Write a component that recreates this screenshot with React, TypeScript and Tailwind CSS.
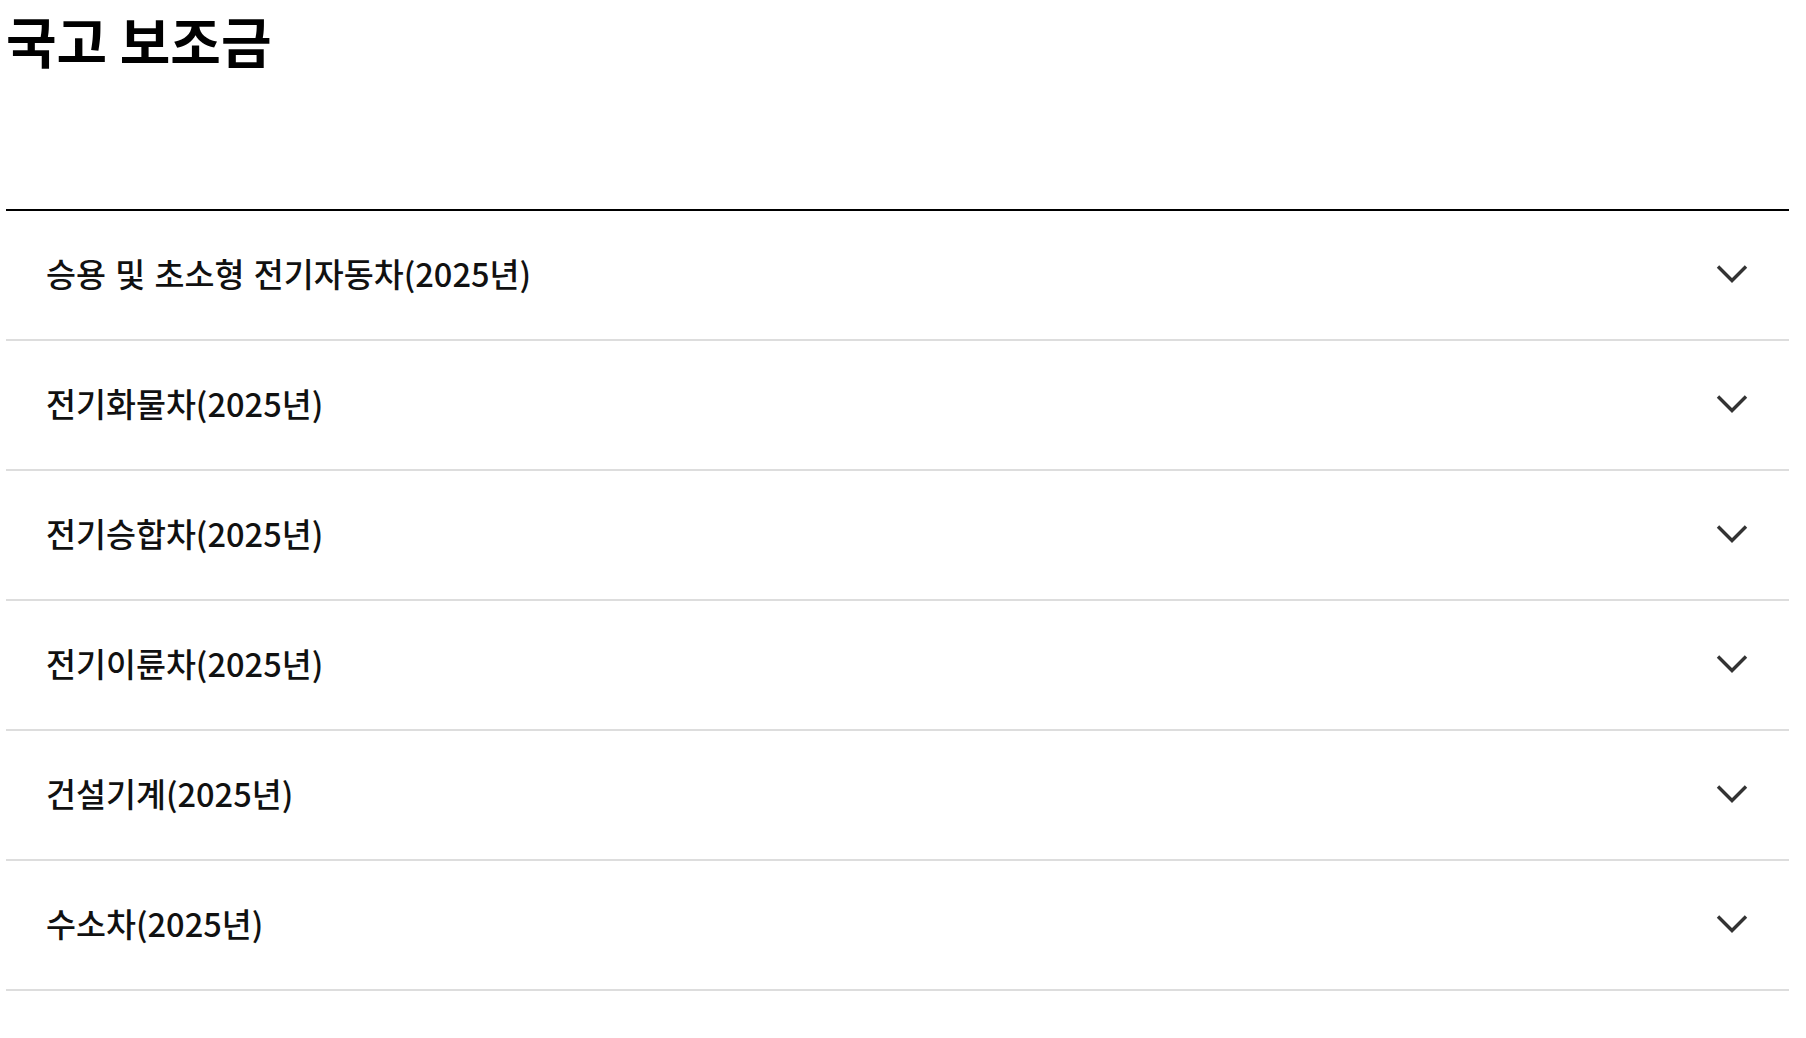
const items = [
  "승용 및 초소형 전기자동차(2025년)",
  "전기화물차(2025년)",
  "전기승합차(2025년)",
  "전기이륜차(2025년)",
  "건설기계(2025년)",
  "수소차(2025년)",
];

function Chevron() {
  return (
    <svg className="mb-[4px]" width="32" height="19" viewBox="0 0 32 19" fill="none" aria-hidden="true">
      <polyline points="2,2.5 16,16.5 30,2.5" stroke="#333333" strokeWidth="3.4" />
    </svg>
  );
}

export default function App() {
  return (
    <div
      className="min-h-screen bg-white text-[#111111]"
      style={{ fontFamily: '"Noto Sans CJK KR", "Noto Sans", sans-serif' }}
    >
      <div className="ml-[6px] mr-[17px]">
        {/* Heading */}
        <div className="h-[209px] pt-[12px]">
          <h1 className="text-[55px] font-bold leading-none text-black">국고 보조금</h1>
        </div>

        {/* Accordion list */}
        <div className="border-t-2 border-black">
          {items.map((label) => (
            <button
              key={label}
              type="button"
              className="flex h-[130px] w-full items-center justify-between border-b-2 border-[#dddddd] pl-10 pr-[41px] text-left"
            >
              <span className="mb-[4px] text-[32.6px] font-medium leading-none [word-spacing:2px]">{label}</span>
              <Chevron />
            </button>
          ))}
        </div>
      </div>
    </div>
  );
}
